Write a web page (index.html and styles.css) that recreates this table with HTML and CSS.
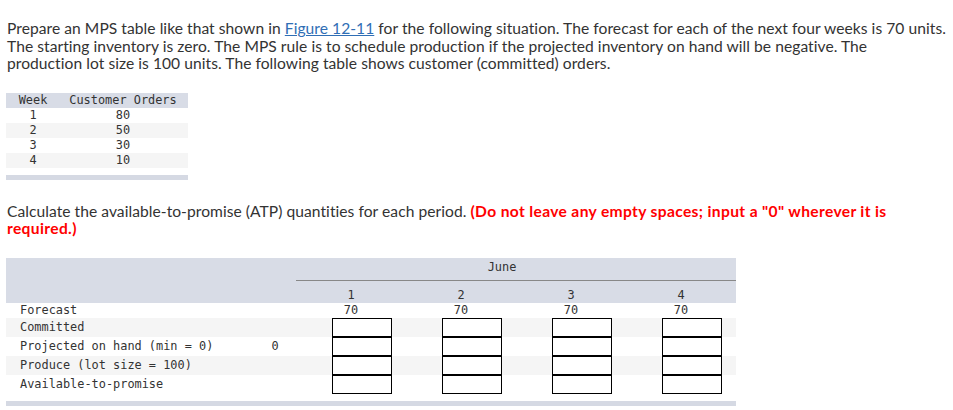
FILE: index.html
```html
<!DOCTYPE html>
<html>
<head>
<meta charset="utf-8">
<link rel="stylesheet" href="styles.css">
</head>
<body>
<div class="page">
  <p class="text intro">Prepare an MPS table like that shown in <a class="link" href="#">Figure 12-11</a> for the following situation. The forecast for each of the next four weeks is 70 units.<br>The starting inventory is zero. The MPS rule is to schedule production if the projected inventory on hand will be negative. The<br>production lot size is 100 units. The following table shows customer (committed) orders.</p>

  <div class="orders">
    <div class="orders-row orders-head"><span>Week</span><span>Customer Orders</span></div>
    <div class="orders-row"><span>1</span><span>80</span></div>
    <div class="orders-row alt"><span>2</span><span>50</span></div>
    <div class="orders-row"><span>3</span><span>30</span></div>
    <div class="orders-row alt"><span>4</span><span>10</span></div>
    <div class="orders-bar"></div>
  </div>

  <p class="text question">Calculate the available-to-promise (ATP) quantities for each period. <strong class="warn">(Do not leave any empty spaces; input a "0" wherever it is required.)</strong></p>

  <div class="mps">
    <div class="mps-head">
      <div class="month">June</div>
      <div class="weeks"><span>1</span><span>2</span><span>3</span><span>4</span></div>
    </div>
    <div class="mps-row">
      <span class="label">Forecast</span><span class="init"></span>
      <span class="val">70</span><span class="val">70</span><span class="val">70</span><span class="val">70</span>
    </div>
    <div class="mps-row tall alt">
      <span class="label">Committed</span><span class="init"></span>
      <span class="cell"><input class="box"></span><span class="cell"><input class="box"></span><span class="cell"><input class="box"></span><span class="cell"><input class="box"></span>
    </div>
    <div class="mps-row tall">
      <span class="label">Projected on hand (min = 0)</span><span class="init">0</span>
      <span class="cell"><input class="box"></span><span class="cell"><input class="box"></span><span class="cell"><input class="box"></span><span class="cell"><input class="box"></span>
    </div>
    <div class="mps-row tall alt">
      <span class="label">Produce (lot size = 100)</span><span class="init"></span>
      <span class="cell"><input class="box"></span><span class="cell"><input class="box"></span><span class="cell"><input class="box"></span><span class="cell"><input class="box"></span>
    </div>
    <div class="mps-row tall">
      <span class="label">Available-to-promise</span><span class="init"></span>
      <span class="cell"><input class="box"></span><span class="cell"><input class="box"></span><span class="cell"><input class="box"></span><span class="cell"><input class="box"></span>
    </div>
    <div class="mps-bar"></div>
  </div>
</div>
</body>
</html>
```

FILE: styles.css
```css
html, body {
  margin: 0;
  padding: 0;
  background: #fff;
}

.page {
  padding: 20px 6px 0 7px;
}

.text {
  margin: 0;
  width: 940px;
  font-family: Lato, "Open Sans", sans-serif;
  font-size: 15.6px;
  letter-spacing: 0.05px;
  line-height: 17.5px;
  color: #333;
}

.intro {
  width: 945px;
}

.link {
  color: #2f6eb5;
  text-decoration: underline;
}

.warn {
  color: #f00;
  font-weight: 700;
  letter-spacing: 0.35px;
}

.orders {
  margin: 20px 0 0 -1px;
  width: 182px;
  font-family: "DejaVu Sans Mono", monospace;
  font-size: 11.9px;
  color: #333;
}

.orders-row {
  display: grid;
  grid-template-columns: 54px 126px;
  height: 15px;
  line-height: 15px;
  text-align: center;
}

.orders-head {
  background: #d8dce6;
}

.alt {
  background: #f5f5f5;
}

.orders-bar {
  margin-top: 7px;
  height: 5px;
  background: #d5d9e3;
}

.question {
  margin-top: 23px;
}

.mps {
  margin: 20px 0 0 -1px;
  width: 730px;
  font-family: "DejaVu Sans Mono", monospace;
  font-size: 11.9px;
  color: #333;
}

.mps-head {
  background: #d8dce6;
  height: 45px;
  display: flex;
  flex-direction: column;
  padding-left: 290px;
}

.month {
  height: 21px;
  line-height: 16px;
  padding-top: 1px;
  border-bottom: 1px solid #888;
  text-align: center;
  padding-right: 28px;
}

.weeks {
  display: grid;
  grid-template-columns: repeat(4, 110px);
  height: 22px;
  line-height: 15px;
  padding-top: 7px;
  box-sizing: border-box;
  text-align: center;
}

.mps-row {
  display: grid;
  grid-template-columns: 248px 42px repeat(4, 110px);
  height: 15px;
  line-height: 15px;
}

.mps-row.tall {
  height: 19px;
  line-height: 19px;
}

.label {
  padding-left: 14px;
}

.init, .val {
  text-align: center;
}

.cell {
  display: flex;
  padding-left: 36px;
}

.box {
  display: block;
  box-sizing: border-box;
  width: 60px;
  height: 19px;
  margin: 0;
  padding: 0;
  border: 1px solid #000;
  background: #fff;
  outline: none;
}

.mps-bar {
  margin-top: 7px;
  height: 5px;
  background: #d5d9e3;
}
```
